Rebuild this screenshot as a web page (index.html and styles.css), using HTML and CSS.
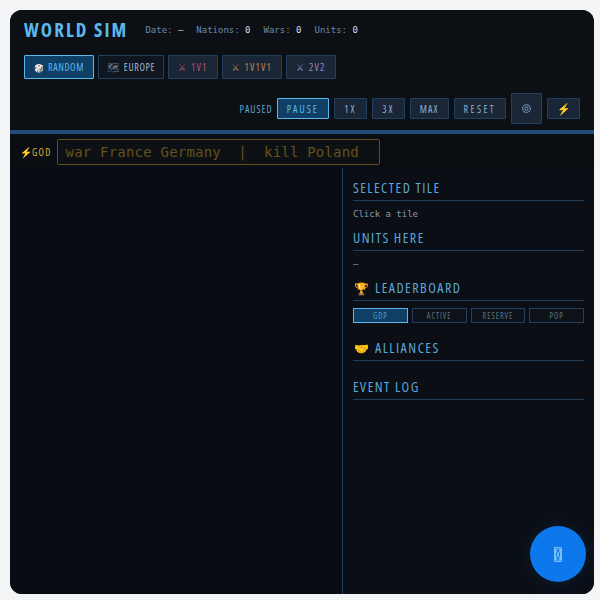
FILE: index.html
```html
<!DOCTYPE html>
<html lang="en">
<head>
<meta charset="utf-8">
<title>World Sim</title>
<link rel="stylesheet" href="styles.css">
</head>
<body>
<div class="app">
  <header class="header">
    <div class="title-row">
      <h1 class="title">WORLD SIM</h1>
      <div class="stats">
        <span>Date: <b>–</b></span>
        <span>Nations: <b>0</b></span>
        <span>Wars: <b>0</b></span>
        <span>Units: <b>0</b></span>
      </div>
    </div>
    <div class="modes">
      <button class="mode mode-active"><span class="emo">🎲</span>RANDOM</button>
      <button class="mode mode-plain"><span class="emo emo-map">🗺</span>EUROPE</button>
      <button class="mode mode-red"><span class="swd">⚔</span>1V1</button>
      <button class="mode mode-orange"><span class="swd">⚔</span>1V1V1</button>
      <button class="mode mode-purple"><span class="swd">⚔</span>2V2</button>
    </div>
    <div class="controls">
      <span class="status">PAUSED</span>
      <button class="ctl ctl-active">PAUSE</button>
      <button class="ctl">1X</button>
      <button class="ctl">3X</button>
      <button class="ctl ctl-max">MAX</button>
      <button class="ctl ctl-reset">RESET</button>
      <button class="ctl ctl-gear" aria-label="Settings">
        <svg viewBox="0 0 12 12" width="11" height="11"><circle cx="6" cy="6" r="1.8" fill="none" stroke="currentColor"/><circle cx="6" cy="6" r="4.2" fill="none" stroke="currentColor" stroke-width="1.1" stroke-dasharray="2 .5"/></svg>
      </button>
      <button class="ctl ctl-bolt">⚡&#xFE0F;</button>
    </div>
  </header>
  <div class="godbar">
    <span class="godlabel"><span class="godbolt">⚡&#xFE0F;</span>GOD</span>
    <div class="godinput">war France Germany  |  kill Poland</div>
  </div>
  <main class="main">
    <div class="map"></div>
    <aside class="side">
      <section class="sec">
        <h2 class="sec-title">SELECTED TILE</h2>
        <p class="muted">Click a tile</p>
      </section>
      <section class="sec">
        <h2 class="sec-title">UNITS HERE</h2>
        <p class="muted">–</p>
      </section>
      <section class="sec">
        <h2 class="sec-title"><span class="sec-emo">🏆</span>LEADERBOARD</h2>
        <div class="tabs">
          <button class="tab tab-active">GDP</button>
          <button class="tab">ACTIVE</button>
          <button class="tab">RESERVE</button>
          <button class="tab">POP</button>
        </div>
      </section>
      <section class="sec">
        <h2 class="sec-title"><span class="sec-emo">🤝</span>ALLIANCES</h2>
      </section>
      <section class="sec">
        <h2 class="sec-title">EVENT LOG</h2>
      </section>
    </aside>
  </main>
  <button class="fab" aria-label="Loading">
    <svg class="fab-icon" viewBox="0 0 8 15" width="8" height="15"><path d="M.5.5h7v14h-7zM1.5 2h5L1.5 13h5zM1.5 2v11M6.5 2v11" fill="none" stroke="currentColor" stroke-width=".7"/></svg>
  </button>
</div>
</body>
</html>
```
FILE: styles.css
```css
* { box-sizing: border-box; margin: 0; padding: 0; }
html, body { height: 100%; }
body {
  background: #f3f4f6;
  padding: 10px 6px 6px 10px;
  font-family: "DejaVu Sans Mono", monospace;
}
.app {
  position: relative;
  height: 584px;
  width: 584px;
  background: #0a0d12;
  border-radius: 12px;
  overflow: hidden;
  display: flex;
  flex-direction: column;
}
button { font-family: inherit; cursor: pointer; }
.header {
  height: 124px;
  background: #0c0f14;
  border-bottom: 4px solid #234a78;
  padding: 9px 14px 0;
}
.title-row { display: flex; align-items: center; gap: 17px; height: 21px; }
.title {
  font-family: "Open Sans", sans-serif;
  font-stretch: 75%;
  font-size: 19px;
  font-weight: 700;
  letter-spacing: 2.1px;
  color: #5bb8ec;
  white-space: nowrap;
}
.stats { display: flex; gap: 13px; font-size: 9px; color: #6d8ba6; }
.stats b { color: #d5dfe8; font-weight: 400; }
.modes { display: flex; gap: 4px; margin-top: 15px; }
.mode {
  display: inline-flex;
  align-items: center;
  gap: 5px;
  height: 24px;
  padding: 0 9px;
  font-family: "Open Sans", sans-serif;
  font-stretch: 75%;
  font-size: 10px;
  letter-spacing: 1.2px;
  border: 1px solid #22405f;
  border-radius: 1px;
  background: #1a2536;
}
.emo { font-size: 8px; letter-spacing: 0; }
.swd { font-size: 10px; letter-spacing: 0; font-family: "DejaVu Sans", sans-serif; }
.emo-map { font-size: 10px; opacity: .6; }
.mode-active { background: #103f66; border-color: #5bb8ec; color: #5bb8ec; gap: 4px; letter-spacing: .6px; }
.mode-plain { background: #0f1620; color: #9fb6c9; padding: 0 8px; gap: 4px; letter-spacing: .6px; }
.mode-red { color: #b3556b; }
.mode-orange { color: #c08a4a; }
.mode-purple { color: #8a8fd0; }
.controls { display: flex; justify-content: flex-end; align-items: center; gap: 5px; margin-top: 14px; }
.status { font-family: "Open Sans", sans-serif; font-stretch: 75%; font-size: 10px; color: #5ba3cf; letter-spacing: 1px; margin-right: -1px; }
.ctl {
  height: 21px;
  min-width: 33px;
  padding: 0 9px;
  background: #1a2536;
  border: 1px solid #22405f;
  border-radius: 1px;
  color: #8fb0cc;
  font-family: "Open Sans", sans-serif;
  font-stretch: 75%;
  font-size: 10px;
  letter-spacing: 2px;
}
.ctl-active { background: #103f66; border-color: #5bb8ec; color: #5bb8ec; }
.ctl-max { letter-spacing: 1.1px; }
.ctl-reset { letter-spacing: 2.4px; }
.ctl-gear { height: 31px; min-width: 31px; width: 31px; padding: 0; display: flex; align-items: center; justify-content: center; color: #7fa8c9; }
.ctl-bolt { width: 33px; padding: 0; letter-spacing: 0; color: #f2c230; font-size: 11px; }
.godbar { height: 34px; display: flex; align-items: center; gap: 5px; padding: 1px 0 0 10px; }
.godlabel { display: inline-flex; align-items: center; gap: 0; font-family: "Open Sans", sans-serif; font-stretch: 75%; font-size: 10px; letter-spacing: 1.2px; color: #d8b33a; white-space: nowrap; }
.godbolt { font-size: 10px; letter-spacing: 0; }
.godinput {
  width: 323px;
  height: 26px;
  border: 1px solid #5c4f1a;
  border-radius: 2px;
  background: #0d1014;
  color: #63531a;
  font-size: 14px;
  letter-spacing: .2px;
  line-height: 24px;
  padding-left: 8px;
  white-space: pre;
}
.main { flex: 1; display: flex; min-height: 0; }
.map { width: 333px; border-right: 1px solid #1f3f5c; background: #090c12; }
.side { flex: 1; padding: 10px; background: #0b0e14; }
.sec { padding-bottom: 8px; }
.sec-title {
  height: 23px;
  font-family: "Open Sans", sans-serif;
  font-stretch: 75%;
  font-size: 14px;
  font-weight: 400;
  letter-spacing: 1.5px;
  color: #5ba8d8;
  border-bottom: 1px solid #1f3f5c;
  padding-top: 1px;
  margin-bottom: 8px;
  line-height: 18px;
}
.sec-emo { font-size: 12px; line-height: 1; letter-spacing: 0; margin: 0 6px 0 1px; }
.muted { font-size: 9px; color: #8a9aa8; line-height: 11px; }
.tabs { display: grid; grid-template-columns: repeat(4, 1fr); gap: 4px; margin: -1px 0 7px; }
.tab {
  height: 15px;
  font-family: "Open Sans", sans-serif;
  font-stretch: 75%;
  font-size: 8px;
  background: #0c1218;
  color: #5c7488;
  border: 1px solid #22405f;
  letter-spacing: 1px;
}
.tab-active { background: #103f66; border-color: #5bb8ec; color: #4b9cd0; }
.fab {
  position: absolute;
  right: 8px;
  bottom: 12px;
  width: 56px;
  height: 56px;
  border-radius: 50%;
  border: 0;
  background: #0d78ec;
  color: #a8dcff;
  display: flex;
  align-items: center;
  justify-content: center;
  box-shadow: 0 0 24px rgba(13, 120, 236, .15);
}
```
